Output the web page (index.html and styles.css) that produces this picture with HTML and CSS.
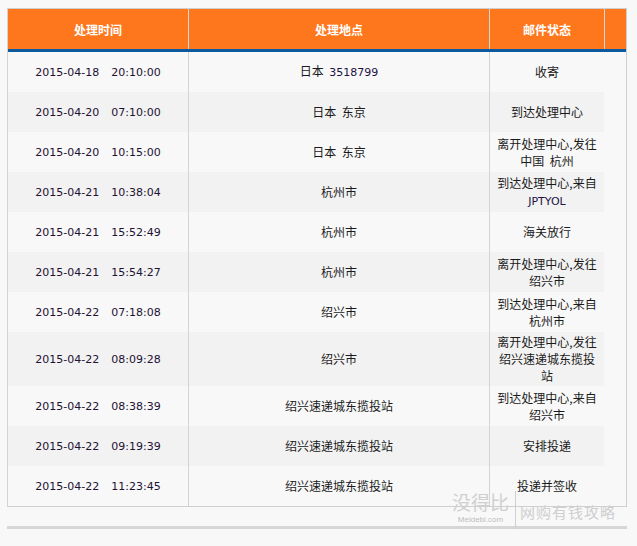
FILE: index.html
```html
<!DOCTYPE html>
<html lang="zh-CN">
<head>
<meta charset="utf-8">
<title>物流跟踪</title>
<link rel="stylesheet" href="styles.css">
</head>
<body>
<div class="page">
  <div class="track">
    <div class="head">
      <div class="hc">处理时间</div>
      <div class="hc">处理地点</div>
      <div class="hc">邮件状态</div>
      <div class="hc last"></div>
    </div>
    <div class="body">
      <div class="row"><div class="c t"><div><span>2015-04-18</span><span class="tm">20:10:00</span></div></div><div class="c"><div>日本&nbsp; <span class="lat">3518799</span></div></div><div class="c s"><div>收寄</div></div></div>
      <div class="row"><div class="c t"><div><span>2015-04-20</span><span class="tm">07:10:00</span></div></div><div class="c"><div>日本&nbsp; 东京</div></div><div class="c s"><div>到达处理中心</div></div></div>
      <div class="row"><div class="c t"><div><span>2015-04-20</span><span class="tm">10:15:00</span></div></div><div class="c"><div>日本&nbsp; 东京</div></div><div class="c s"><div>离开处理中心,发往中国&nbsp; 杭州</div></div></div>
      <div class="row"><div class="c t"><div><span>2015-04-21</span><span class="tm">10:38:04</span></div></div><div class="c"><div>杭州市</div></div><div class="c s"><div>到达处理中心,来自<span class="lat">JPTYOL</span></div></div></div>
      <div class="row"><div class="c t"><div><span>2015-04-21</span><span class="tm">15:52:49</span></div></div><div class="c"><div>杭州市</div></div><div class="c s"><div>海关放行</div></div></div>
      <div class="row"><div class="c t"><div><span>2015-04-21</span><span class="tm">15:54:27</span></div></div><div class="c"><div>杭州市</div></div><div class="c s"><div>离开处理中心,发往绍兴市</div></div></div>
      <div class="row"><div class="c t"><div><span>2015-04-22</span><span class="tm">07:18:08</span></div></div><div class="c"><div>绍兴市</div></div><div class="c s"><div>到达处理中心,来自杭州市</div></div></div>
      <div class="row"><div class="c t"><div><span>2015-04-22</span><span class="tm">08:09:28</span></div></div><div class="c"><div>绍兴市</div></div><div class="c s"><div>离开处理中心,发往绍兴速递城东揽投站</div></div></div>
      <div class="row"><div class="c t"><div><span>2015-04-22</span><span class="tm">08:38:39</span></div></div><div class="c"><div>绍兴速递城东揽投站</div></div><div class="c s"><div>到达处理中心,来自绍兴市</div></div></div>
      <div class="row"><div class="c t"><div><span>2015-04-22</span><span class="tm">09:19:39</span></div></div><div class="c"><div>绍兴速递城东揽投站</div></div><div class="c s"><div>安排投递</div></div></div>
      <div class="row"><div class="c t"><div><span>2015-04-22</span><span class="tm">11:23:45</span></div></div><div class="c"><div>绍兴速递城东揽投站</div></div><div class="c s"><div>投递并签收</div></div></div>
    </div>
  </div>
  <div class="rule"></div>
  <div class="wm">
    <div class="wm-brand">
      <div class="wm-cn">没得比</div>
      <div class="wm-en">Meidebi.com</div>
    </div>
    <div class="wm-slogan">网购有钱攻略</div>
  </div>
</div>
</body>
</html>
```
FILE: styles.css
```css
html, body {
  margin: 0;
  padding: 0;
  background: #f8f8f8;
}
body {
  font-family: "Noto Sans CJK SC", "DejaVu Sans", sans-serif;
  font-size: 12px;
  color: #1a1a1a;
}
.page {
  position: relative;
  padding: 8px 10px 0 7px;
  width: 620px;
}
.track {
  border: 1px solid #cfcfcf;
  border-left-color: #d4d4d4;
  width: 618px;
}
.head {
  display: grid;
  grid-template-columns: 181px 301px 115px 21px;
  background: #ff771d;
  border-bottom: 3px solid #0b5a9f;
  height: 40px;
}
.hc {
  box-sizing: border-box;
  border-right: 1px solid #d8d8d8;
  display: flex;
  align-items: center;
  justify-content: center;
  color: #fff;
  font-weight: bold;
  font-size: 12px;
}
.hc.last {
  border-right: none;
}
.body {
  display: flex;
  flex-direction: column;
}
.row {
  display: grid;
  grid-template-columns: 181px 301px 114px;
  min-height: 40px;
}
.row:nth-child(even) .c {
  background: #f2f2f2;
}
.c {
  box-sizing: border-box;
  border-right: 1px solid #d4d4d4;
  display: flex;
  align-items: center;
  justify-content: center;
  text-align: center;
  line-height: 17px;
  padding: 1px 4px 2px;
}
.c.s {
  border-right: none;
}
.t {
  font-family: "DejaVu Sans", sans-serif;
  font-size: 11px;
  color: #221133;
  padding-top: 2px;
  padding-bottom: 1px;
}
.tm {
  margin-left: 12px;
}
.lat {
  font-family: "DejaVu Sans", sans-serif;
  font-size: 11px;
  color: #221144;
}
.rule {
  margin-top: 19px;
  height: 3px;
  background: #d6d6d6;
  width: 620px;
}
.wm {
  position: absolute;
  left: 452px;
  top: 491px;
  display: flex;
  align-items: flex-start;
  color: #c8c8c8;
}
.wm-brand {
  display: flex;
  flex-direction: column;
  align-items: center;
  padding-right: 6px;
  border-right: 1px solid #cfcfcf;
  height: 43px;
}
.wm-cn {
  font-size: 19px;
  line-height: 22px;
  white-space: nowrap;
  color: #d0d0d0;
}
.wm-en {
  font-family: "Liberation Sans", sans-serif;
  font-size: 8px;
  line-height: 14px;
  color: #bdbdbd;
}
.wm-slogan {
  margin-top: 12px;
  margin-left: 4px;
  font-size: 15px;
  line-height: 18px;
  letter-spacing: 1px;
  color: #cfcfcf;
  white-space: nowrap;
}
```
